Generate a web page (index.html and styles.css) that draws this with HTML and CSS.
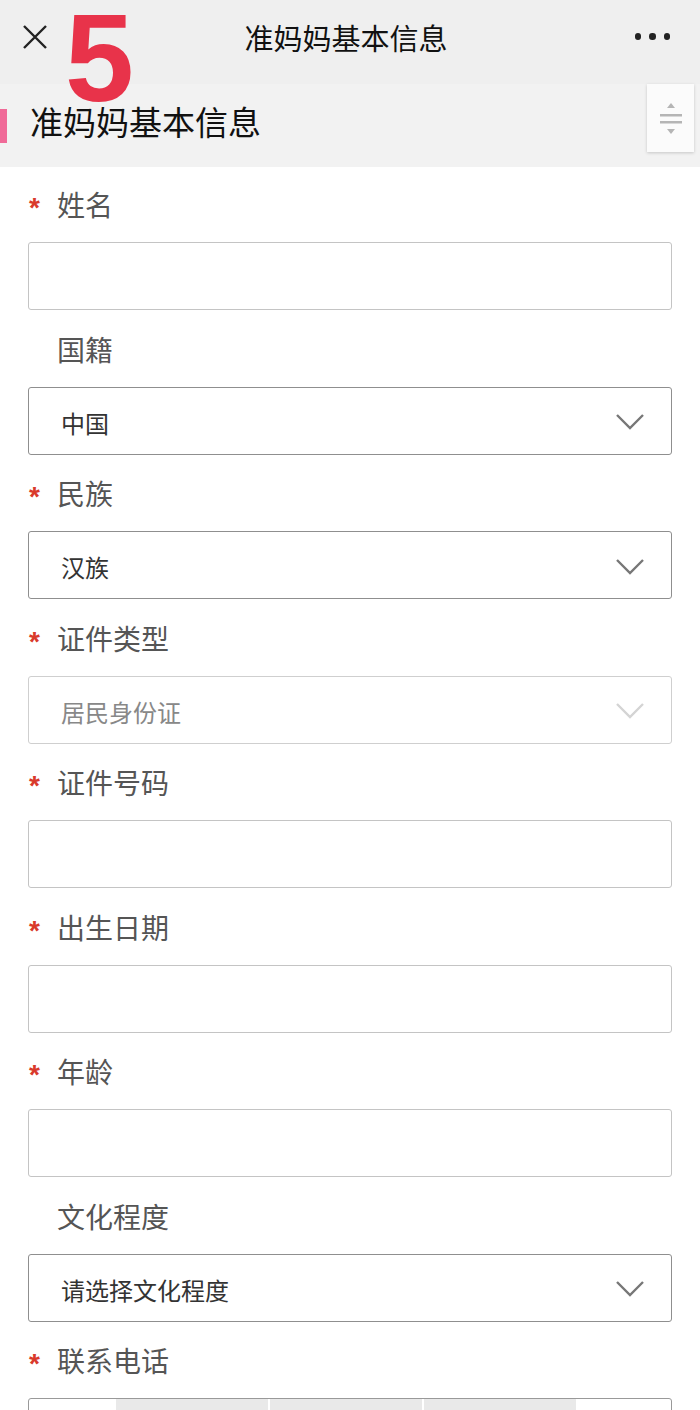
FILE: index.html
```html
<!DOCTYPE html>
<html lang="zh">
<head>
<meta charset="utf-8">
<title>准妈妈基本信息</title>
<link rel="stylesheet" href="styles.css">
</head>
<body>
<div class="page">
  <header class="topbar">
    <svg class="close" width="30" height="30" viewBox="0 0 30 30"><path d="M4 4 L26 26 M26 4 L4 26" stroke="#222" stroke-width="2.4" fill="none"/></svg>
    <div class="toptitle">准妈妈基本信息</div>
    <div class="dots"><span></span><span></span><span></span></div>
    <div class="step">5</div>
  </header>
  <div class="section">
    <div class="bar"></div>
    <div class="sectitle">准妈妈基本信息</div>
    <div class="scroller">
      <svg width="30" height="44" viewBox="0 0 30 44"><path d="M11 12 L15 7 L19 12 Z" fill="#b5b5b5"/><rect x="4" y="18" width="22" height="2.5" fill="#b5b5b5"/><rect x="4" y="25" width="22" height="2.5" fill="#b5b5b5"/><path d="M11 33 L15 38 L19 33 Z" fill="#b5b5b5"/></svg>
    </div>
  </div>
  <main class="form">
    <div class="field">
      <div class="label"><span class="req">*</span>姓名</div>
      <div class="box"></div>
    </div>
    <div class="field">
      <div class="label"><span class="req blank">*</span>国籍</div>
      <div class="box select"><span class="val">中国</span><svg class="chev" width="30" height="18" viewBox="0 0 30 18"><path d="M2 2 L15 15 L28 2" stroke="#777" stroke-width="2.4" fill="none"/></svg></div>
    </div>
    <div class="field">
      <div class="label"><span class="req">*</span>民族</div>
      <div class="box select"><span class="val">汉族</span><svg class="chev" width="30" height="18" viewBox="0 0 30 18"><path d="M2 2 L15 15 L28 2" stroke="#777" stroke-width="2.4" fill="none"/></svg></div>
    </div>
    <div class="field">
      <div class="label"><span class="req">*</span>证件类型</div>
      <div class="box select disabled"><span class="val">居民身份证</span><svg class="chev" width="30" height="18" viewBox="0 0 30 18"><path d="M2 2 L15 15 L28 2" stroke="#d4d4d4" stroke-width="2.4" fill="none"/></svg></div>
    </div>
    <div class="field">
      <div class="label"><span class="req">*</span>证件号码</div>
      <div class="box"></div>
    </div>
    <div class="field">
      <div class="label"><span class="req">*</span>出生日期</div>
      <div class="box"></div>
    </div>
    <div class="field">
      <div class="label"><span class="req">*</span>年龄</div>
      <div class="box"></div>
    </div>
    <div class="field">
      <div class="label"><span class="req blank">*</span>文化程度</div>
      <div class="box select"><span class="val">请选择文化程度</span><svg class="chev" width="30" height="18" viewBox="0 0 30 18"><path d="M2 2 L15 15 L28 2" stroke="#777" stroke-width="2.4" fill="none"/></svg></div>
    </div>
    <div class="field">
      <div class="label"><span class="req">*</span>联系电话</div>
      <div class="box phone"><div class="ph"><span></span><span></span><span></span></div></div>
    </div>
  </main>
</div>
</body>
</html>
```
FILE: styles.css
```css
html, body {
  margin: 0;
  padding: 0;
  background: #ffffff;
}
body {
  font-family: "Noto Sans CJK SC", "Noto Sans", sans-serif;
  width: 700px;
  height: 1410px;
  overflow: hidden;
}
.page {
  width: 700px;
  height: 1410px;
  overflow: hidden;
}
.topbar {
  position: relative;
  height: 84px;
  background: #efefef;
  display: flex;
  align-items: center;
  justify-content: center;
}
.close {
  position: absolute;
  left: 20px;
  top: 22px;
}
.toptitle {
  font-size: 29px;
  color: #111;
  line-height: 40px;
  margin-top: -10px;
  margin-left: -8px;
}
.dots {
  position: absolute;
  right: 30px;
  top: 33px;
  display: flex;
  gap: 8px;
}
.dots span {
  width: 6.5px;
  height: 6.5px;
  border-radius: 50%;
  background: #222;
}
.step {
  position: absolute;
  left: 65px;
  top: 14px;
  font-family: "Liberation Sans", Arial, sans-serif;
  font-weight: bold;
  font-size: 124px;
  line-height: 88px;
  height: 88px;
  color: #e8334a;
  z-index: 2;
}
.section {
  position: relative;
  height: 83px;
  background: #f2f2f2;
  display: flex;
  align-items: center;
}
.bar {
  width: 7px;
  height: 34px;
  background: #f06a98;
  margin-right: 23px;
  margin-top: 1px;
}
.sectitle {
  font-size: 33px;
  color: #111;
  line-height: 34px;
  margin-top: -10px;
}
.scroller {
  position: absolute;
  right: 6px;
  top: 0;
  width: 47px;
  height: 68px;
  background: #fbfbfb;
  box-shadow: 0 1px 3px rgba(0,0,0,0.18);
  display: flex;
  align-items: center;
  justify-content: center;
}
.form {
  padding: 17px 28px 0 28px;
}
.field {
  margin-bottom: 18.5px;
}
.label {
  height: 40px;
  display: flex;
  align-items: center;
  font-size: 28px;
  color: #555;
  margin-bottom: 18px;
}
.req {
  color: #d93a2b;
  font-size: 28px;
  width: 29px;
  padding-left: 1px;
  box-sizing: border-box;
  font-family: "Liberation Sans", Arial, sans-serif;
  font-weight: bold;
  line-height: 1;
  margin-top: 8px;
}
.req.blank {
  visibility: hidden;
}
.box {
  height: 68px;
  box-sizing: border-box;
  border: 1.5px solid #c4c4c4;
  border-radius: 3px;
  background: #fff;
  display: flex;
  align-items: center;
  padding: 3px 26px 0 32px;
}
.select {
  border-color: #8f8f8f;
}
.val {
  flex: 1;
  font-size: 24px;
  color: #333;
}
.disabled {
  border-color: #cfcfcf;
}
.disabled .val {
  color: #888;
}
.chev {
  margin-top: 0;
}
.phone {
  align-items: flex-start;
  border-color: #999;
  padding-top: 0;
}
.ph {
  display: flex;
  gap: 2px;
  margin-left: 55px;
}
.ph span {
  width: 152px;
  height: 12px;
  background: #e9e9e9;
}
```
